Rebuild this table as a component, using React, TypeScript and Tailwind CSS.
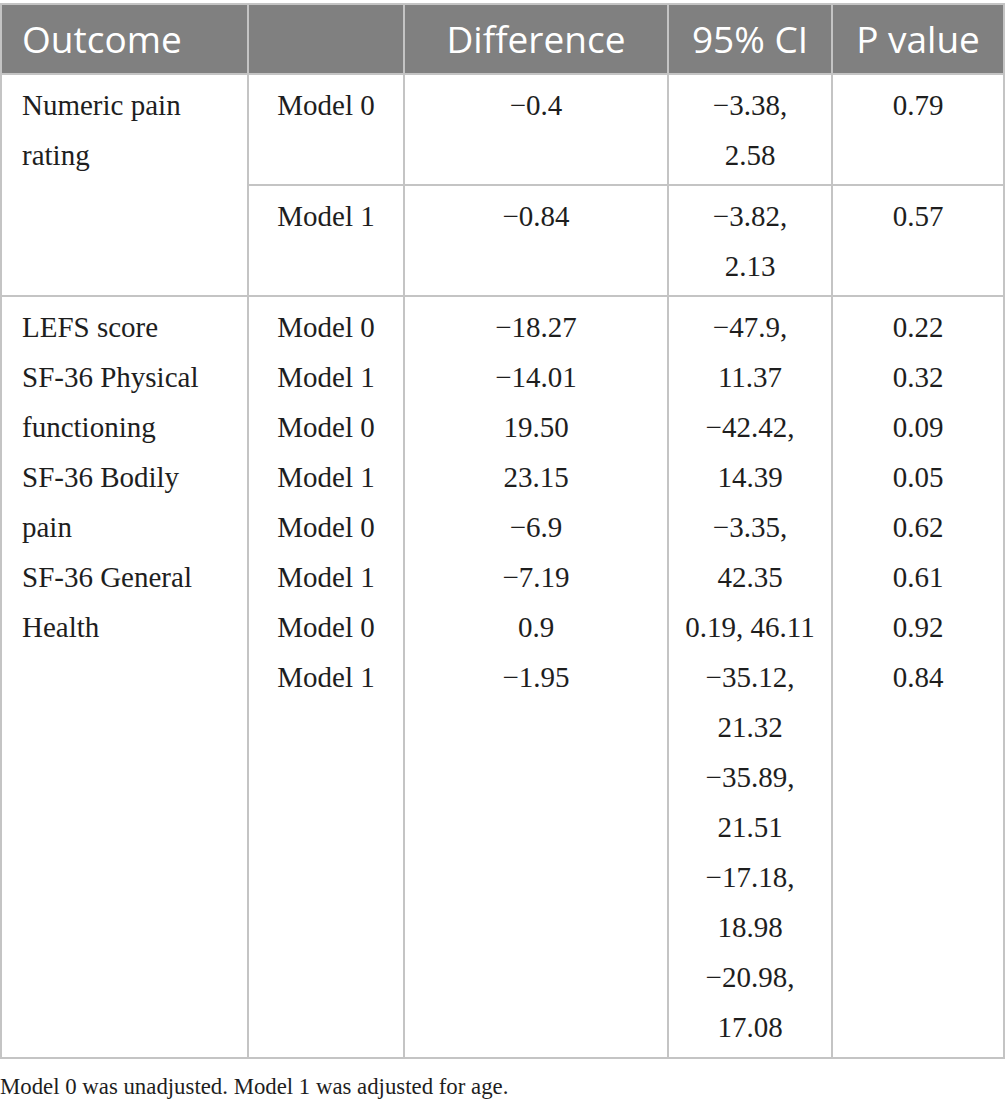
import React from 'react';

const serif = { fontFamily: '"Liberation Serif", "Times New Roman", serif' };
const sans = { fontFamily: '"Open Sans", "Noto Sans", sans-serif' };

// 单元格内逐行文本
const Lines: React.FC<{ items: string[] }> = ({ items }) => (
  <>
    {items.map((t, i) => (
      <div key={i} className="whitespace-nowrap">
        {t}
      </div>
    ))}
  </>
);

const cols = 'grid grid-cols-[245px_156px_264px_164px_172px]';
const cell = 'border-l-2 border-[#c4c4c4] text-center';
const bodyCell = 'border-t-2 border-[#c4c4c4] pt-[5px] pb-[4px]';
const lastCell = 'border-t-2 border-[#c4c4c4] pt-[5px] pb-[5px]';

const App: React.FC = () => {
  return (
    <div className="w-[1005px] bg-white pt-[3px]">
      <div className="border-2 border-[#c4c4c4]">
        {/* 表头 */}
        <div className={`${cols} h-[68px] items-stretch bg-[#808080] text-[37px] text-white`} style={sans}>
          <div className="flex items-center pl-5">Outcome</div>
          <div className={cell}></div>
          <div className={`${cell} flex items-center justify-center`}>Difference</div>
          <div className={`${cell} flex items-center justify-center`}>95% CI</div>
          <div className={`${cell} flex items-center justify-center`}>P value</div>
        </div>

        {/* 数据 */}
        <div className={`${cols} text-[29px] leading-[50px] text-[#1e1e1e]`} style={serif}>
          {/* Numeric pain rating */}
          <div className={`${bodyCell} row-span-2 pl-5`}>
            <Lines items={['Numeric pain', 'rating']} />
          </div>
          <div className={`${bodyCell} ${cell}`}>
            <Lines items={['Model 0', '\u00a0']} />
          </div>
          <div className={`${bodyCell} ${cell}`}>
            <Lines items={['−0.4']} />
          </div>
          <div className={`${bodyCell} ${cell}`}>
            <Lines items={['−3.38,', '2.58']} />
          </div>
          <div className={`${bodyCell} ${cell}`}>
            <Lines items={['0.79']} />
          </div>

          <div className={`${bodyCell} ${cell}`}>
            <Lines items={['Model 1', '\u00a0']} />
          </div>
          <div className={`${bodyCell} ${cell}`}>
            <Lines items={['−0.84']} />
          </div>
          <div className={`${bodyCell} ${cell}`}>
            <Lines items={['−3.82,', '2.13']} />
          </div>
          <div className={`${bodyCell} ${cell}`}>
            <Lines items={['0.57']} />
          </div>

          {/* 其余结局指标 */}
          <div className={`${lastCell} pl-5`}>
            <Lines
              items={[
                'LEFS score',
                'SF-36 Physical',
                'functioning',
                'SF-36 Bodily',
                'pain',
                'SF-36 General',
                'Health',
              ]}
            />
          </div>
          <div className={`${lastCell} ${cell}`}>
            <Lines
              items={['Model 0', 'Model 1', 'Model 0', 'Model 1', 'Model 0', 'Model 1', 'Model 0', 'Model 1']}
            />
          </div>
          <div className={`${lastCell} ${cell}`}>
            <Lines items={['−18.27', '−14.01', '19.50', '23.15', '−6.9', '−7.19', '0.9', '−1.95']} />
          </div>
          <div className={`${lastCell} ${cell}`}>
            <Lines
              items={[
                '−47.9,',
                '11.37',
                '−42.42,',
                '14.39',
                '−3.35,',
                '42.35',
                '0.19, 46.11',
                '−35.12,',
                '21.32',
                '−35.89,',
                '21.51',
                '−17.18,',
                '18.98',
                '−20.98,',
                '17.08',
              ]}
            />
          </div>
          <div className={`${lastCell} ${cell}`}>
            <Lines items={['0.22', '0.32', '0.09', '0.05', '0.62', '0.61', '0.92', '0.84']} />
          </div>
        </div>
      </div>

      <p className="pt-[8px] text-[22.8px] leading-[40px] text-[#1e1e1e]" style={serif}>
        Model 0 was unadjusted. Model 1 was adjusted for age.
      </p>
    </div>
  );
};

export default App;
